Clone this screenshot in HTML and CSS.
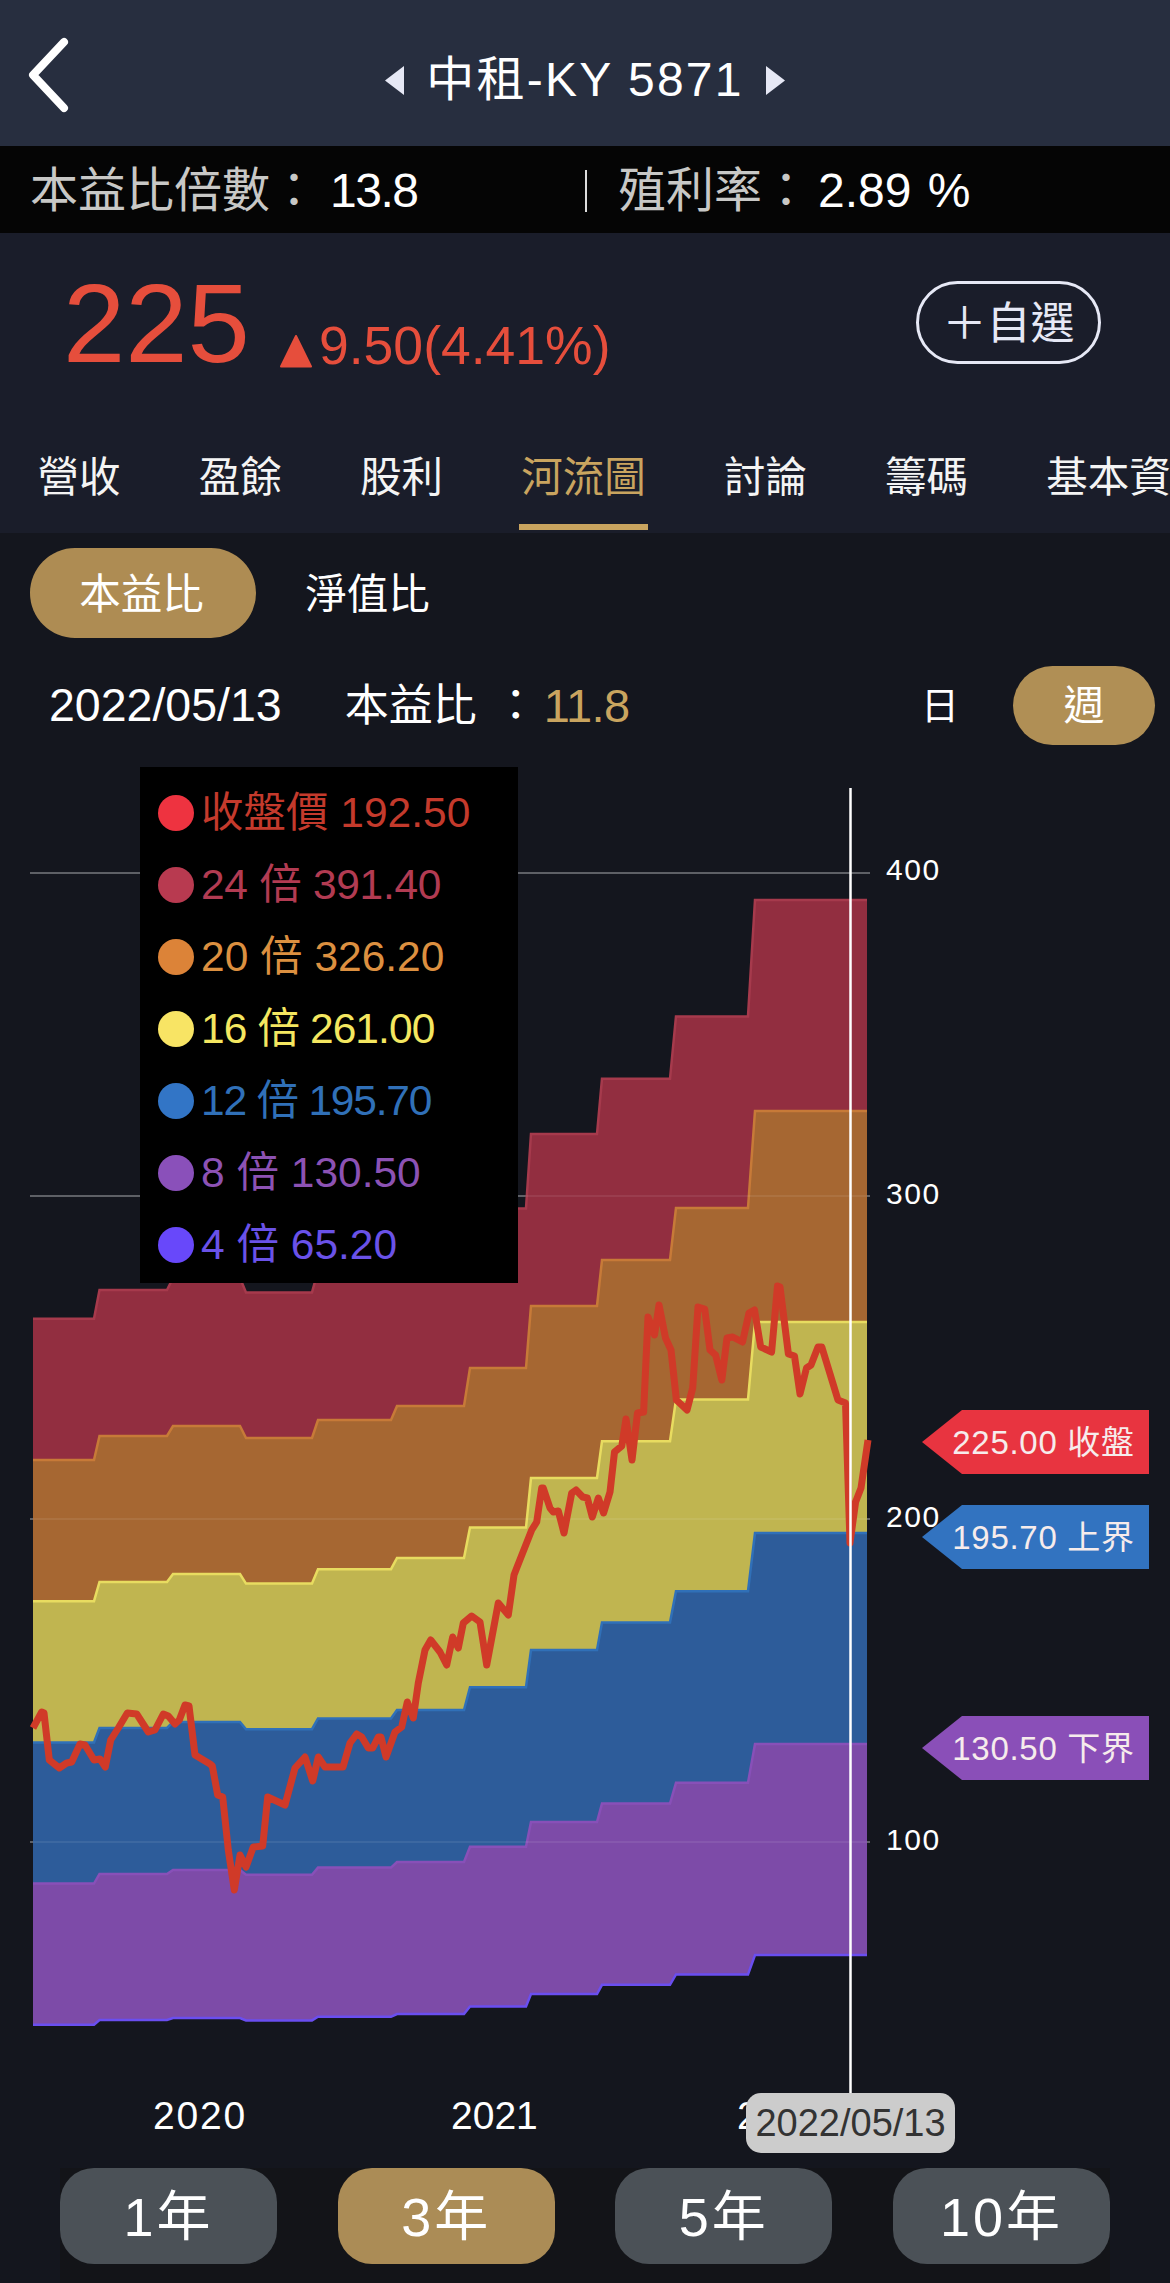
FILE: index.html
```html
<!DOCTYPE html>
<html lang="zh-Hant">
<head>
<meta charset="utf-8">
<title>中租-KY 5871 河流圖</title>
<link rel="stylesheet" href="styles.css">
</head>
<body>
<header class="topbar">
  <svg class="back" viewBox="0 0 46 76" width="46" height="76"><path d="M38 5 L7 38 L38 71"/></svg>
  <div class="title">
    <svg class="arrow" viewBox="0 0 19 29" width="19" height="29"><path d="M19 0V29L0 14.5Z"/></svg>
    <span class="title-text">中租-KY 5871</span>
    <svg class="arrow" viewBox="0 0 19 29" width="19" height="29"><path d="M0 0V29L19 14.5Z"/></svg>
  </div>
  <div></div>
</header>

<section class="metrics">
  <div class="metric metric-left"><span class="m-label">本益比倍數：</span><span class="m-val m-pe">13.8</span></div>
  <div class="metric-sep"></div>
  <div class="metric"><span class="m-label">殖利率：</span><span class="m-val m-yield">2.89 %</span></div>
</section>

<section class="quote">
  <div class="price">225</div>
  <div class="change">
    <svg class="up" viewBox="0 0 32 33" width="32" height="33"><path d="M16 1L31 31.5H1Z"/></svg>
    <span>9.50(4.41%)</span>
  </div>
  <button class="watch">＋自選</button>
</section>

<nav class="tabs">
  <a class="tab">營收</a>
  <a class="tab">盈餘</a>
  <a class="tab">股利</a>
  <a class="tab tab-on">河流圖</a>
  <a class="tab">討論</a>
  <a class="tab">籌碼</a>
  <a class="tab">基本資料</a>
</nav>

<main class="panel">
  <div class="ratio">
    <span class="pill pill-on">本益比</span>
    <span class="pill">淨值比</span>
  </div>

  <div class="readout">
    <span class="r-date">2022/05/13</span>
    <span class="r-label">本益比</span>
    <span class="r-colon">：</span>
    <span class="r-val">11.8</span>
    <span class="r-day">日</span>
    <span class="r-week">週</span>
  </div>

  <div class="chart">
    <svg class="plot" viewBox="0 760 1170 1408" width="1170" height="1408">
      <defs>
        <path id="area" d="M33 0V35.3H94L99.5 36.5H167L173 37H240L246 36.4H312L318 37.3H391L397 38H464L470 39.9H526L531 43H597L602 45.3H670L676 47.9H748L755 52.75H867V0Z"/>
        <path id="edge" d="M33 35.3H94L99.5 36.5H167L173 37H240L246 36.4H312L318 37.3H391L397 38H464L470 39.9H526L531 43H597L602 45.3H670L676 47.9H748L755 52.75H867"/>
      </defs>
      <g class="grid">
        <path d="M30 873H870M30 1196H870M30 1519H870M30 1842H870"/>
      </g>
      <use href="#area" class="f24" transform="translate(0 2166) scale(1 -24)"/>
      <use href="#edge" class="l24" transform="translate(0 2166) scale(1 -24)"/>
      <use href="#area" class="f20" transform="translate(0 2166) scale(1 -20)"/>
      <use href="#edge" class="l20" transform="translate(0 2166) scale(1 -20)"/>
      <use href="#area" class="f16" transform="translate(0 2166) scale(1 -16)"/>
      <use href="#edge" class="l16" transform="translate(0 2166) scale(1 -16)"/>
      <use href="#area" class="f12" transform="translate(0 2166) scale(1 -12)"/>
      <use href="#edge" class="l12" transform="translate(0 2166) scale(1 -12)"/>
      <use href="#area" class="f8" transform="translate(0 2166) scale(1 -8)"/>
      <use href="#edge" class="l8" transform="translate(0 2166) scale(1 -8)"/>
      <use href="#area" class="f4" transform="translate(0 2166) scale(1 -4)"/>
      <use href="#edge" class="l4" transform="translate(0 2166) scale(1 -4)"/>
      <path class="grid-over" d="M526 1196H867M33 1519H867M33 1842H867"/>
      <polyline class="close" points="33,1728 41.7,1712 44,1713 49.3,1760 59.3,1768 66.7,1763 71.7,1762 80,1744 85,1745 94,1760 100,1759 105.3,1767 110.7,1740 118.3,1728 127.3,1713 136.7,1714 148.3,1732 155,1730 163.3,1714 168.3,1716 175,1724 179.3,1720 185,1705 189,1706 195,1755 210,1764 212.3,1766 217.7,1795 222.7,1797 228.3,1850 234.3,1890 240,1855 246,1867 253.3,1847 262.7,1846 267.7,1797 285,1805 295,1768 305,1757 312.7,1781 318.3,1757 325,1767 343,1767 350,1743 356.7,1734 361.7,1737 368.3,1748 372.7,1748 378.3,1737 381,1737 386,1757 395,1732 401.7,1727 407.3,1702 413.3,1718 418.3,1683 425,1650 430.7,1640 440,1652 446.7,1665 452.7,1637 458.3,1648 463.3,1623 471.7,1616 480,1622 486.7,1665 498.3,1603 508.3,1615 514,1575 516.7,1568 531.7,1530 536.7,1522 541.7,1488 543.3,1488 550,1508 553.3,1512 558.3,1511 564,1533 571.7,1493 576,1490 582.7,1497 587.3,1498 592.3,1517 598.3,1498 603.6,1513 610,1492 614.5,1452 621.8,1446 626,1419 632,1460 637.5,1413 643.6,1412 648,1317 654.5,1335 659,1305 665.5,1338 671,1350 676.4,1400 687,1410 692.7,1388 698,1307 704.7,1309 710,1350 715.6,1355 721.8,1380 727,1338 732.7,1337 742.5,1342 749,1313 754.5,1310 760.7,1347 771.6,1352 777.5,1286 780,1287 788.4,1354 794.5,1356 800,1394 806.5,1368 811,1365 818,1347 821.8,1347 838,1400 845.5,1403 850,1543 855.6,1502 861,1488 868,1440"/>
      <path class="cross" d="M850.5 788V2093"/>
      <text class="axis" x="886" y="880">400</text>
      <text class="axis" x="886" y="1204">300</text>
      <text class="axis" x="886" y="1527">200</text>
      <text class="axis" x="886" y="1850">100</text>
      <text class="year" x="153" y="2129">2020</text>
      <text class="year year-tight" x="451" y="2129">2021</text>
      <text class="year" x="737" y="2129">2022</text>
    </svg>

    <div class="legend">
      <div class="lg lg-close"><i></i>收盤價 192.50</div>
      <div class="lg lg-24"><i></i>24 倍 391.40</div>
      <div class="lg lg-20"><i></i>20 倍 326.20</div>
      <div class="lg lg-16"><i></i>16 倍 261.00</div>
      <div class="lg lg-12"><i></i>12 倍 195.70</div>
      <div class="lg lg-8"><i></i>8 倍 130.50</div>
      <div class="lg lg-4"><i></i>4 倍 65.20</div>
    </div>

    <div class="tag tag-close">225.00 收盤</div>
    <div class="tag tag-upper">195.70 上界</div>
    <div class="tag tag-lower">130.50 下界</div>

    <div class="datebox">2022/05/13</div>
  </div>

  <footer class="ranges">
    <button class="range">1年</button>
    <button class="range range-on">3年</button>
    <button class="range">5年</button>
    <button class="range">10年</button>
  </footer>
</main>
</body>
</html>
```

FILE: styles.css
```css
* { box-sizing: border-box; }

html, body {
  margin: 0;
  padding: 0;
}

body {
  width: 1170px;
  height: 2283px;
  overflow: hidden;
  background: #14161e;
  color: #fff;
  font-family: "Liberation Sans", "Noto Sans CJK TC", sans-serif;
}

/* top bar */
.topbar {
  height: 146px;
  background: #272e3f;
  display: grid;
  grid-template-columns: 1fr auto 1fr;
  align-items: center;
  padding: 14px 0 0;
}

.back path {
  fill: none;
  stroke: #fff;
  stroke-width: 8;
  stroke-linecap: round;
  stroke-linejoin: round;
}

.back {
  display: block;
  margin: -10px 0 0 26px;
}

.title {
  display: flex;
  align-items: center;
  gap: 22px;
  font-size: 48px;
  line-height: 1;
  color: #fff;
}

.title-text { letter-spacing: 2.2px; }

.arrow path { fill: #e6e8f5; }

/* metrics */
.metrics {
  height: 87px;
  background: #050505;
  display: flex;
  align-items: center;
  padding-top: 2px;
  font-size: 48px;
  line-height: 1;
}

.metric {
  display: flex;
  align-items: center;
}

.metric-left {
  width: 585px;
  padding-left: 30px;
}

.metric-sep {
  width: 2px;
  height: 42px;
  background: #ddd;
  margin-right: 31px;
}

.m-label { color: #c8c8c6; }
.m-val { color: #fff; }
.m-pe { letter-spacing: -1.5px; margin-left: 12px; }
.m-yield { margin-left: 8px; word-spacing: 3px; }

/* quote */
.quote {
  height: 187px;
  background: #1a1d2a;
  display: flex;
  align-items: flex-start;
  padding: 48px 69px 0 63px;
}

.price {
  font-size: 112px;
  line-height: 86px;
  color: #e64e3c;
  width: 217px;
}

.change {
  display: flex;
  align-items: flex-end;
  gap: 7px;
  margin-top: 42px;
  font-size: 53.5px;
  line-height: 46px;
  color: #e64e3c;
}

.up path {
  fill: #e64e3c;
  stroke: #e64e3c;
  stroke-width: 2;
  stroke-linejoin: round;
}

.up { display: block; margin-bottom: 1px; }

.watch {
  margin-left: auto;
  width: 185px;
  height: 83px;
  border: 3px solid #e6e8f5;
  border-radius: 42px;
  background: transparent;
  color: #e6e8f5;
  font-family: inherit;
  font-size: 44px;
  line-height: 1;
  padding: 3px 0 0;
}

/* tabs */
.tabs {
  height: 113px;
  background: #1a1d2a;
  display: flex;
  align-items: stretch;
  padding-left: 0;
  overflow: hidden;
  font-size: 41.5px;
  line-height: 1;
}

.tab {
  flex: none;
  display: flex;
  align-items: center;
  height: 110px;
  padding: 5px 39.1px 0;
  color: #f4f4f4;
  white-space: nowrap;
  position: relative;
  left: -1.5px;
}

.tab-on { color: #c9a45f; }

.tab-on::after {
  content: "";
  position: absolute;
  left: 37px;
  right: 36.6px;
  bottom: 0;
  height: 6px;
  background: #c9a45f;
}

/* panel */
.panel {
  height: 1750px;
}

.ratio {
  display: flex;
  padding: 15px 0 0 30px;
}

.pill {
  width: 226px;
  height: 90px;
  border-radius: 45px;
  display: flex;
  align-items: center;
  justify-content: center;
  padding: 3px 3px 0 0;
  font-size: 41.5px;
  line-height: 1;
  color: #fff;
}

.pill-on { background: #ae8c53; }

.readout {
  display: flex;
  align-items: center;
  height: 79px;
  margin-top: 28px;
  padding: 0 15px 0 49px;
  line-height: 1;
}

.r-date { font-size: 46.5px; }
.r-label { font-size: 44px; margin-left: 63px; }
.r-colon { font-size: 44px; margin-left: 17px; }
.r-val { font-size: 47px; color: #c9a45f; margin-left: 6px; letter-spacing: -.5px; }
.r-day { font-size: 38px; margin-left: auto; margin-right: 54px; }

.r-week {
  width: 142px;
  height: 79px;
  border-radius: 40px;
  background: #b08f55;
  display: flex;
  align-items: center;
  justify-content: center;
  padding-top: 2px;
  font-size: 41px;
}

/* chart */
.chart {
  position: relative;
  height: 1408px;
  margin-top: 15px;
}

.plot { display: block; }

.grid path {
  fill: none;
  stroke: #77797f;
  stroke-width: 1.5;
}

.grid-over {
  fill: none;
  stroke: rgba(255, 255, 255, .1);
  stroke-width: 1.5;
}

#edge {
  fill: none;
  vector-effect: non-scaling-stroke;
  stroke-width: 2.5;
}

.f24 { fill: #922e40; }
.f20 { fill: #a66732; }
.f16 { fill: #c0b550; }
.f12 { fill: #2d5c9a; }
.f8  { fill: #7d4ba8; }
.f4  { fill: #14161e; }

.l24 { stroke: #a63a4c; }
.l20 { stroke: #c77a38; }
.l16 { stroke: #e8dc60; }
.l12 { stroke: #3070b8; }
.l8  { stroke: #8850b8; }
.l4  { stroke: #6a4ef0; }

.close {
  fill: none;
  stroke: #d03a28;
  stroke-width: 7;
  stroke-linejoin: round;
}

.cross {
  fill: none;
  stroke: #fff;
  stroke-width: 2.5;
}

.axis {
  fill: #fff;
  font-size: 30px;
  letter-spacing: 1.6px;
}

.year {
  fill: #fff;
  font-size: 39px;
  letter-spacing: 1.8px;
}

.year-tight { letter-spacing: 0; }

/* legend tooltip */
.legend {
  position: absolute;
  left: 140px;
  top: 7px;
  width: 378px;
  height: 516px;
  background: #000;
  padding: 10px 0 0 18px;
}

.lg {
  display: flex;
  align-items: center;
  gap: 7px;
  height: 72px;
  font-size: 42.5px;
  line-height: 1;
  white-space: pre;
}

.lg i {
  flex: none;
  width: 36px;
  height: 36px;
  border-radius: 50%;
  background: currentColor;
}

.lg-close { color: #c43a2c; }
.lg-close i { background: #ee3340; }
.lg-24 { color: #b23b52; letter-spacing: -.3px; }
.lg-24 i { background: #b83a50; }
.lg-20 { color: #dc9040; }
.lg-20 i { background: #dc8338; }
.lg-16 { color: #f4e760; letter-spacing: -.9px; }
.lg-16 i { background: #f8e464; }
.lg-12 { color: #3070b8; letter-spacing: -1.2px; }
.lg-12 i { background: #3275c6; }
.lg-8 { color: #8c52b4; }
.lg-8 i { background: #8a50ba; }
.lg-4 { color: #6a52e8; }
.lg-4 i { background: #6848fa; }

/* value tags */
.tag {
  position: absolute;
  left: 922px;
  width: 227px;
  height: 64px;
  padding-left: 16px;
  display: flex;
  align-items: center;
  justify-content: center;
  clip-path: polygon(0 50%, 40px 0, 100% 0, 100% 100%, 40px 100%);
  font-size: 33px;
  line-height: 1;
  letter-spacing: .7px;
  color: #f6ecec;
  white-space: pre;
}

.tag-close { top: 650px; background: #e83440; }
.tag-upper { top: 745px; background: #3273c0; }
.tag-lower { top: 956px; background: #8a4fb8; }

/* crosshair date */
.datebox {
  position: absolute;
  left: 746px;
  top: 1333px;
  width: 209px;
  height: 60px;
  border-radius: 15px;
  background: #ccc;
  color: #333;
  display: flex;
  align-items: center;
  justify-content: center;
  font-size: 38px;
  line-height: 1;
}

/* range buttons */
.ranges {
  height: 115px;
  margin: 0 60px;
  background: #131418;
  display: grid;
  grid-template-columns: repeat(4, 217px);
  justify-content: space-between;
  align-items: start;
}

.range {
  height: 96px;
  border: 0;
  border-radius: 34px;
  background: #4b5157;
  color: #fff;
  font-family: inherit;
  font-size: 54px;
  letter-spacing: 3px;
  line-height: 1;
  padding: 2px 0 0;
}

.range-on { background: #ab8c56; }
```
